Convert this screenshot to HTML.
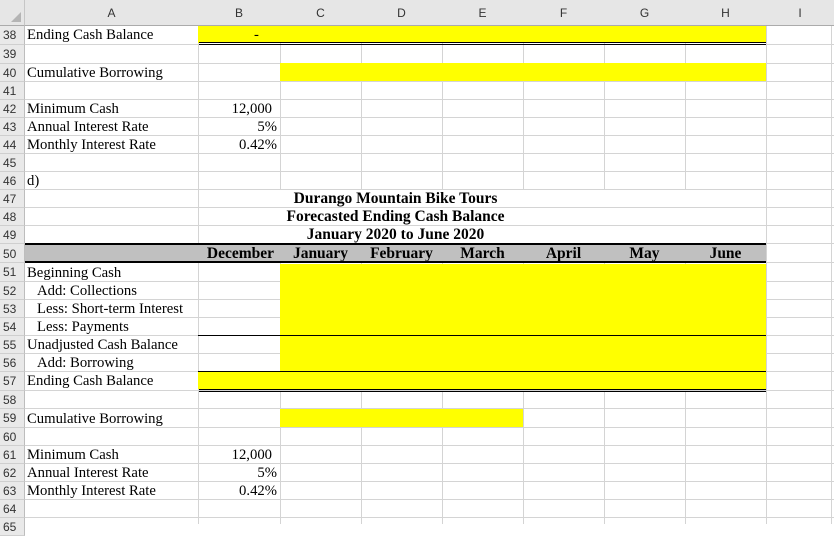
<!DOCTYPE html>
<html><head><meta charset="utf-8"><style>
*{margin:0;padding:0;box-sizing:border-box}
body{width:834px;height:524px;overflow:hidden;background:#fff;position:relative;font-family:"Liberation Serif",serif;font-size:14.7px;color:#000}
div{position:absolute}
.h{left:25px;width:809px;height:1px;background:#d4d4d4}
.v{top:26px;height:498px;width:1px;background:#d4d4d4}
.ch{top:0;height:26px;background:#e6e6e6;border-right:1px solid #c6c6c6;border-bottom:1px solid #ababab;font-family:"Liberation Sans",sans-serif;font-size:12px;color:#333;text-align:center;line-height:26px}
.rn{left:0;width:25px;font-family:"Liberation Sans",sans-serif;font-size:12px;color:#333;padding-left:3px;background:#e9e9e9;border-right:1px solid #bdbdbd;border-bottom:1px solid #cfcfcf}
.y{background:#ffff00}
.t{white-space:nowrap;line-height:18px}
.b{background:#000;height:1px}
.r{text-align:right}
.bold{font-weight:bold;font-size:15.5px}
</style></head><body>
<div class="h" style="top:44px"></div><div class="h" style="top:63px"></div><div class="h" style="top:81px"></div><div class="h" style="top:99px"></div><div class="h" style="top:117px"></div><div class="h" style="top:135px"></div><div class="h" style="top:153px"></div><div class="h" style="top:171px"></div><div class="h" style="top:189px"></div><div class="h" style="top:207px"></div><div class="h" style="top:225px"></div><div class="h" style="top:243px"></div><div class="h" style="top:262px"></div><div class="h" style="top:281px"></div><div class="h" style="top:299px"></div><div class="h" style="top:317px"></div><div class="h" style="top:335px"></div><div class="h" style="top:353px"></div><div class="h" style="top:371px"></div><div class="h" style="top:390px"></div><div class="h" style="top:408px"></div><div class="h" style="top:427px"></div><div class="h" style="top:445px"></div><div class="h" style="top:463px"></div><div class="h" style="top:481px"></div><div class="h" style="top:499px"></div><div class="h" style="top:517px"></div>
<div class="v" style="left:198px"></div><div class="v" style="left:280px"></div><div class="v" style="left:361px"></div><div class="v" style="left:442px"></div><div class="v" style="left:523px"></div><div class="v" style="left:604px"></div><div class="v" style="left:685px"></div><div class="v" style="left:766px"></div><div class="v" style="left:831px"></div>
<div style="left:199px;top:190px;width:567px;height:53px;background:#fff"></div>
<div style="left:199px;top:189px;width:567px;height:1px;background:#d4d4d4"></div>
<div style="left:199px;top:207px;width:567px;height:1px;background:#d4d4d4"></div>
<div style="left:199px;top:225px;width:567px;height:1px;background:#d4d4d4"></div>
<div class="ch" style="left:0;width:25px;background:#e6e6e6"></div>
<div style="left:11px;top:12px;width:0;height:0;border-left:10px solid transparent;border-bottom:10px solid #b4b4b4"></div>
<div class="ch" style="left:25px;width:174px">A</div>
<div class="ch" style="left:198px;width:83px">B</div>
<div class="ch" style="left:280px;width:82px">C</div>
<div class="ch" style="left:361px;width:82px">D</div>
<div class="ch" style="left:442px;width:82px">E</div>
<div class="ch" style="left:523px;width:82px">F</div>
<div class="ch" style="left:604px;width:82px">G</div>
<div class="ch" style="left:685px;width:82px">H</div>
<div class="ch" style="left:766px;width:68px;border-right:none">I</div>
<div class="rn" style="top:26px;height:19px;line-height:18px">38</div>
<div class="rn" style="top:45px;height:19px;line-height:19px">39</div>
<div class="rn" style="top:64px;height:18px;line-height:18px">40</div>
<div class="rn" style="top:82px;height:18px;line-height:18px">41</div>
<div class="rn" style="top:100px;height:18px;line-height:18px">42</div>
<div class="rn" style="top:118px;height:18px;line-height:18px">43</div>
<div class="rn" style="top:136px;height:18px;line-height:18px">44</div>
<div class="rn" style="top:154px;height:18px;line-height:18px">45</div>
<div class="rn" style="top:172px;height:18px;line-height:18px">46</div>
<div class="rn" style="top:190px;height:18px;line-height:18px">47</div>
<div class="rn" style="top:208px;height:18px;line-height:18px">48</div>
<div class="rn" style="top:226px;height:18px;line-height:18px">49</div>
<div class="rn" style="top:244px;height:19px;line-height:20px">50</div>
<div class="rn" style="top:263px;height:19px;line-height:19px">51</div>
<div class="rn" style="top:282px;height:18px;line-height:18px">52</div>
<div class="rn" style="top:300px;height:18px;line-height:18px">53</div>
<div class="rn" style="top:318px;height:18px;line-height:18px">54</div>
<div class="rn" style="top:336px;height:18px;line-height:18px">55</div>
<div class="rn" style="top:354px;height:18px;line-height:18px">56</div>
<div class="rn" style="top:372px;height:19px;line-height:19px">57</div>
<div class="rn" style="top:391px;height:18px;line-height:18px">58</div>
<div class="rn" style="top:409px;height:19px;line-height:19px">59</div>
<div class="rn" style="top:428px;height:18px;line-height:18px">60</div>
<div class="rn" style="top:446px;height:18px;line-height:18px">61</div>
<div class="rn" style="top:464px;height:18px;line-height:18px">62</div>
<div class="rn" style="top:482px;height:18px;line-height:18px">63</div>
<div class="rn" style="top:500px;height:18px;line-height:18px">64</div>
<div class="rn" style="top:518px;height:18px;line-height:18px">65</div>
<div class="y" style="left:198px;top:26px;width:568px;height:17px"></div>
<div class="b" style="left:199px;top:42px;width:567px"></div>
<div class="b" style="left:199px;top:44px;width:567px"></div>
<div class="y" style="left:280px;top:63px;width:486px;height:18px"></div>
<div style="left:25px;top:243px;width:741px;height:20px;background:#c0c0c0;border-top:2px solid #000;border-bottom:2px solid #000"></div>
<div class="y" style="left:280px;top:264px;width:486px;height:108px"></div>
<div class="b" style="left:198px;top:335px;width:568px"></div>
<div class="b" style="left:198px;top:371px;width:568px"></div>
<div class="y" style="left:198px;top:372px;width:568px;height:17px"></div>
<div class="b" style="left:199px;top:389px;width:567px"></div>
<div class="b" style="left:199px;top:391px;width:567px"></div>
<div class="y" style="left:280px;top:409px;width:243px;height:18px"></div>
<div class="t" style="left:27px;top:26px">Ending Cash Balance</div>
<div class="t" style="left:254px;top:26px">-</div>
<div class="t" style="left:27px;top:64px">Cumulative Borrowing</div>
<div class="t r" style="left:198px;width:74px;top:100px">12,000</div>
<div class="t" style="left:27px;top:100px">Minimum Cash</div>
<div class="t" style="left:27px;top:118px">Annual Interest Rate</div>
<div class="t r" style="left:198px;width:79px;top:118px">5%</div>
<div class="t" style="left:27px;top:136px">Monthly Interest Rate</div>
<div class="t r" style="left:198px;width:79px;top:136px">0.42%</div>
<div class="t" style="left:27px;top:172px">d)</div>
<div class="t bold" style="left:198px;width:395px;text-align:center;top:190px">Durango Mountain Bike Tours</div>
<div class="t bold" style="left:198px;width:395px;text-align:center;top:208px">Forecasted Ending Cash Balance</div>
<div class="t bold" style="left:198px;width:395px;text-align:center;top:226px">January 2020 to June 2020</div>
<div class="t bold" style="left:190px;width:84px;text-align:right;top:245px">December</div>
<div class="t bold" style="left:280px;width:81px;text-align:center;top:245px">January</div>
<div class="t bold" style="left:361px;width:81px;text-align:center;top:245px">February</div>
<div class="t bold" style="left:442px;width:81px;text-align:center;top:245px">March</div>
<div class="t bold" style="left:523px;width:81px;text-align:center;top:245px">April</div>
<div class="t bold" style="left:604px;width:81px;text-align:center;top:245px">May</div>
<div class="t bold" style="left:685px;width:81px;text-align:center;top:245px">June</div>
<div class="t" style="left:27px;top:264px">Beginning Cash</div>
<div class="t" style="left:37px;top:282px">Add: Collections</div>
<div class="t" style="left:37px;top:300px">Less: Short-term Interest</div>
<div class="t" style="left:37px;top:318px">Less: Payments</div>
<div class="t" style="left:27px;top:336px">Unadjusted Cash Balance</div>
<div class="t" style="left:37px;top:354px">Add: Borrowing</div>
<div class="t" style="left:27px;top:372px">Ending Cash Balance</div>
<div class="t" style="left:27px;top:410px">Cumulative Borrowing</div>
<div class="t" style="left:27px;top:446px">Minimum Cash</div>
<div class="t r" style="left:198px;width:74px;top:446px">12,000</div>
<div class="t" style="left:27px;top:464px">Annual Interest Rate</div>
<div class="t r" style="left:198px;width:79px;top:464px">5%</div>
<div class="t" style="left:27px;top:482px">Monthly Interest Rate</div>
<div class="t r" style="left:198px;width:79px;top:482px">0.42%</div>
</body></html>
